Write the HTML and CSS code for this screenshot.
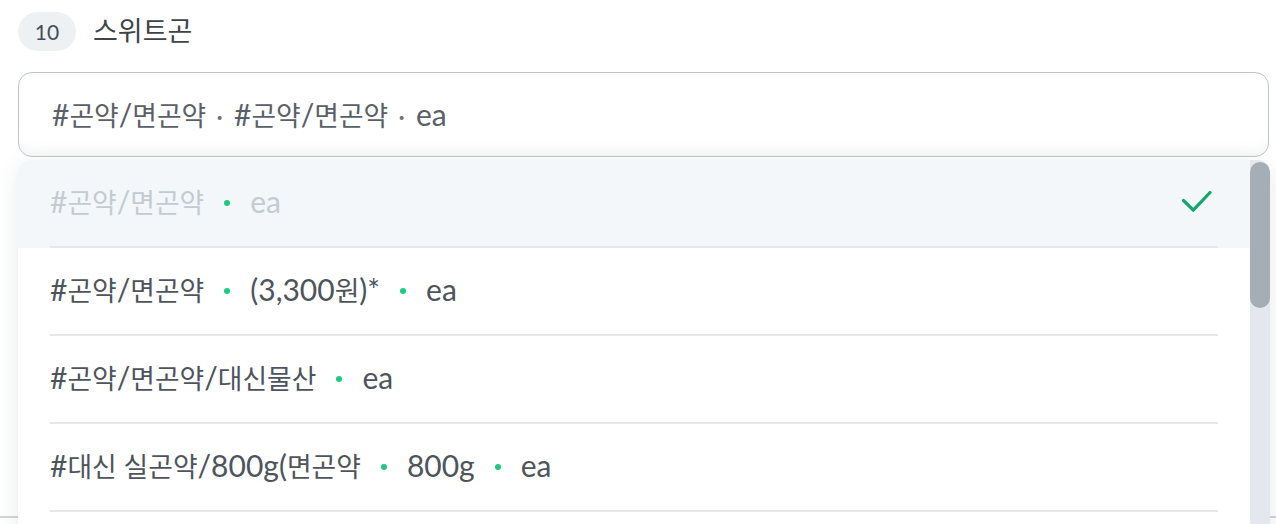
FILE: index.html
```html
<!DOCTYPE html>
<html lang="ko">
<head>
<meta charset="utf-8">
<link rel="stylesheet" href="styles.css">
</head>
<body>
<div class="page">
  <div class="section">
    <div class="header">
      <span class="badge">10</span>
      <span class="title">스위트곤</span>
    </div>
    <div class="field">
      <div class="input">#<span class="ko">곤약</span>/<span class="ko">면곤약</span><span class="sep">·</span>#<span class="ko">곤약</span>/<span class="ko">면곤약</span><span class="sep">·</span>ea</div>
      <div class="dropdown">
        <div class="list">
          <div class="row selected">
            <div class="row-inner">
              <span class="label">#<span class="ko">곤약</span>/<span class="ko">면곤약</span><i class="dot"></i>ea</span>
              <svg class="check" width="30" height="22" viewBox="0 0 30 22"><path d="M1.5 9.5 L11.3 19.2 L28 1.5" fill="none" stroke="#13a86b" stroke-width="3.2" stroke-linecap="round" stroke-linejoin="round"/></svg>
            </div>
          </div>
          <div class="row">
            <div class="row-inner"><span class="label">#<span class="ko">곤약</span>/<span class="ko">면곤약</span><i class="dot"></i>(3,300<span class="ko">원</span>)*<i class="dot"></i>ea</span></div>
          </div>
          <div class="row">
            <div class="row-inner"><span class="label">#<span class="ko">곤약</span>/<span class="ko">면곤약</span>/<span class="ko">대신물산</span><i class="dot"></i>ea</span></div>
          </div>
          <div class="row">
            <div class="row-inner"><span class="label">#<span class="ko">대신 실곤약</span>/800g(<span class="ko">면곤약</span><i class="dot"></i>800g<i class="dot"></i>ea</span></div>
          </div>
        </div>
        <div class="scrollbar"><div class="thumb"></div></div>
      </div>
    </div>
  </div>
</div>
</body>
</html>
```

FILE: styles.css
```css
html, body {
  margin: 0;
  padding: 0;
  background: #ffffff;
  overflow: hidden;
}
body {
  font-family: Lato, "Noto Sans CJK KR", sans-serif;
  color: #4e545b;
}
.page {
  width: 1276px;
  height: 524px;
  overflow: hidden;
}
.section {
  padding: 12px 7px 0 18px;
  height: 504px;
  border-bottom: 2px solid #cfd5da;
}
.header {
  display: flex;
  align-items: center;
  gap: 17px;
  height: 39px;
}
.badge {
  display: flex;
  align-items: center;
  justify-content: center;
  width: 58px;
  height: 39px;
  border-radius: 20px;
  background: #eef1f4;
  font-size: 21px;
  color: #474d54;
}
.title {
  font-size: 27px;
  color: #3d4349;
  line-height: 1;
  margin-top: -2px;
}
.field {
  position: relative;
  margin-top: 21px;
}
.input {
  height: 83px;
  box-sizing: content-box;
  border: 1.5px solid #bdc5cc;
  border-radius: 14px;
  padding: 0 33px;
  display: flex;
  align-items: baseline;
  align-content: center;
  flex-wrap: wrap;
  font-size: 30px;
  color: #5a6067;
  box-shadow: inset 0 -14px 14px -10px rgba(20, 30, 40, 0.05);
}
.ko {
  font-size: 26.8px;
}
.sep {
  margin: 0 11px 0 10px;
  font-size: 26px;
  color: #6c7278;
}
.dropdown {
  position: absolute;
  top: 88px;
  left: 0;
  width: 1252px;
  height: 420px;
  display: flex;
  background: #ffffff;
  border-radius: 12px 12px 0 0;
  box-shadow: 0 6px 22px rgba(30, 45, 60, 0.10);
  overflow: hidden;
}
.list {
  flex: 1;
}
.row {
  height: 88px;
}
.row.selected {
  background: #f3f7fa;
}
.row-inner {
  margin: 0 32px;
  height: 86px;
  border-bottom: 2px solid #e3e8ec;
  display: flex;
  align-items: center;
  justify-content: space-between;
}
.label {
  font-size: 30px;
  color: #4e545b;
  display: flex;
  align-items: baseline;
  margin-top: -3px;
}
.selected .label {
  color: #c3cbd2;
}
.dot {
  display: inline-block;
  width: 6px;
  height: 6px;
  border-radius: 50%;
  background: #1ec97d;
  margin: 0 20px;
  align-self: center;
  position: relative;
  top: 1px;
}
.check {
  margin-right: 6px;
  margin-top: -2px;
}
.scrollbar {
  width: 20px;
  background: #e4e8ec;
  padding-top: 2px;
}
.thumb {
  height: 146px;
  border-radius: 10px;
  background: #a5aeb5;
}
```
